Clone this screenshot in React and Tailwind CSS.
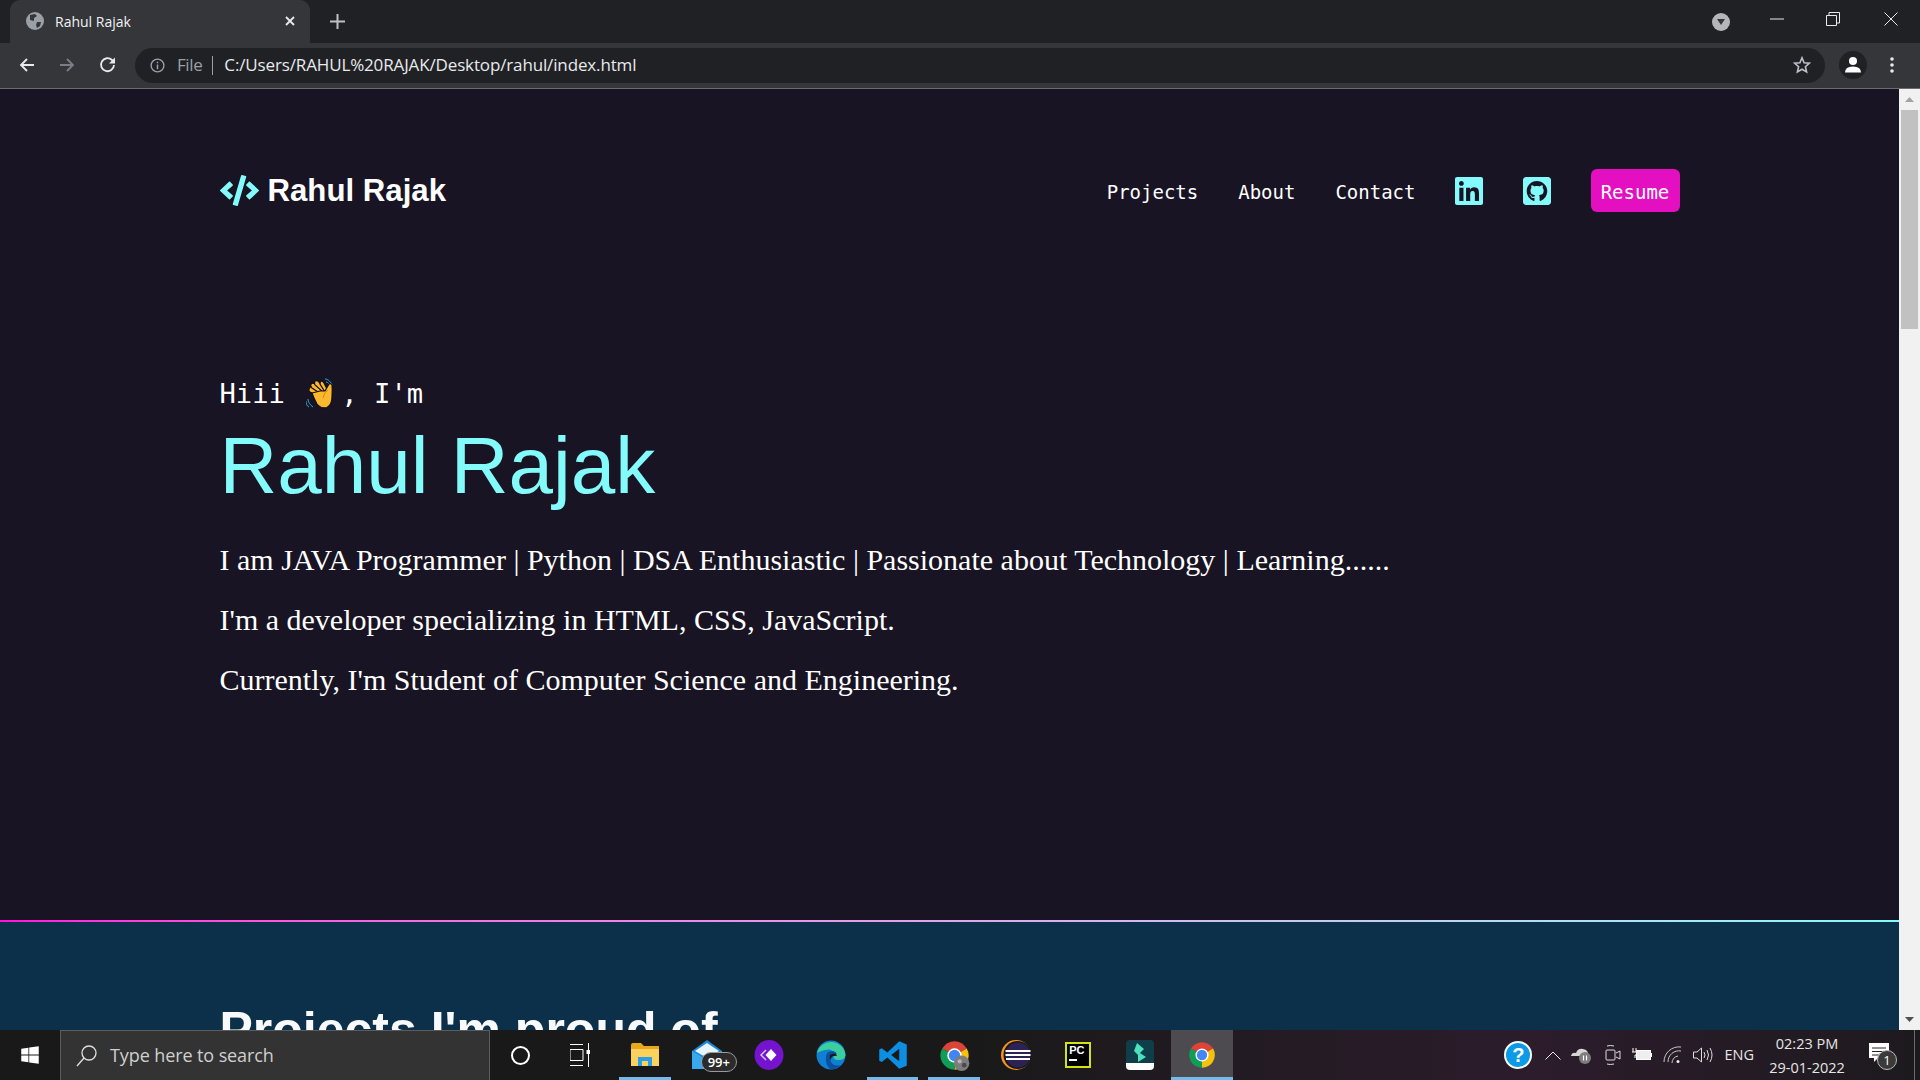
import React from "react";
import { FaCode, FaLinkedin, FaGithubSquare, FaWindows } from "react-icons/fa";

const ChromeIcon = ({ size = 28, badge = false }) => (
  <svg width={size} height={size} viewBox="0 0 24 24">
    <path d="M12 12 L2.5 6.5 A11 11 0 0 1 21.5 6.5 Z" fill="#db4437" />
    <path d="M12 12 L21.5 6.5 A11 11 0 0 1 12 23 Z" fill="#f4c20d" />
    <path d="M12 12 L12 23 A11 11 0 0 1 2.5 6.5 Z" fill="#0f9d58" />
    <circle cx="12" cy="12" r="5.6" fill="#fff" />
    <circle cx="12" cy="12" r="4.4" fill="#4285f4" />
    {badge && <circle cx="17.5" cy="18" r="6" fill="#7d7d7d" />}
    {badge && <circle cx="16" cy="16.5" r="1.6" fill="#b5b5b5" />}
    {badge && <circle cx="19.5" cy="19.5" r="1.8" fill="#4a4a4a" />}
  </svg>
);

const Hand = () => (
  <svg width="30" height="32" viewBox="0 0 30 32" className="mx-auto">
    <path d="M2 21c0 3 2 6 5 8M0 23c0 3 1 5 3 6M19 1c3 0 6 3 7 6M20 4c2 0 3 2 4 3" fill="none" stroke="#2aa9d6" strokeWidth="1" />
    <g stroke="#101010" strokeWidth="1.2" fill="#fdb92d">
      <path d="M3 11 Q4 8 7 9 L15 15 L12 18 L4 14 Q2.500 13 3 11Z" />
      <path d="M5 6 Q7 4 9 6 L18 13 L15 16 L6 10 Q4 8 5 6Z" />
      <path d="M9 3 Q11 2 13 4 L20 12 L17 14 L9 7 Q8 5 9 3Z" />
      <path d="M15 3 Q17 3 18 5 L22 13 L19 14 L14 6 Q14 4 15 3Z" />
      <path d="M6 15 L14 13 L19 13 L23 6 Q25 5 26 7 Q26.500 12 26 19 Q26 27 21 29.500 Q15 31 11 26 Q8 21 6 15Z" />
    </g>
    <path d="M22 12 Q18 14 17 20" fill="none" stroke="#d98a10" strokeWidth="1" />
  </svg>
);

const Slot = ({ active, children, selected }) => (
  <div className={`relative flex h-full w-[61.9px] items-center justify-center ${selected ? "bg-[#4e4b50]" : ""}`}>
    {children}
    {active && <div className="absolute bottom-0 left-[5px] right-[5px] h-[3px] bg-[#76b9ed]" />}
    {selected && <div className="absolute bottom-0 left-0 right-0 h-[3px] bg-[#76b9ed]" />}
  </div>
);

export default function App() {
  return (
    <div className="flex h-screen w-full flex-col overflow-hidden bg-[#181423] font-['Liberation_Sans',sans-serif]">
      {/* tab strip */}
      <div className="flex h-[43px] shrink-0 items-end bg-[#202124] pl-[10px]">
        <div className="flex h-[43px] w-[300px] items-center rounded-t-[10px] bg-[#35363a] pb-[1px] pl-[16px] pr-[14px]">
          <svg width="18" height="18" viewBox="0 0 18 18">
            <circle cx="9" cy="9" r="9" fill="#9aa0a6" />
            <path d="M4 3 L9 2 L11 4 L8 6 L8 9 L4 8 Z M11 10 L15 10 L14 14 L11 16 L10 13 Z" fill="#35363a" />
          </svg>
          <span className="ml-[11px] font-['Open_Sans',sans-serif] text-[14px] text-[#f1f3f4]">Rahul Rajak</span>
          <svg className="ml-auto" width="12" height="12" viewBox="0 0 12 12">
            <path d="M2 2 L10 10 M10 2 L2 10" stroke="#e8eaed" strokeWidth="1.800" />
          </svg>
        </div>
        <svg className="mb-[14px] ml-[20px]" width="15" height="15" viewBox="0 0 15 15">
          <path d="M7.500 0 V15 M0 7.500 H15" stroke="#bdc1c6" strokeWidth="2" />
        </svg>
        <div className="ml-auto flex h-full items-center">
          <div className="mt-[1px] flex h-[18px] w-[18px] items-center justify-center rounded-full bg-[#b4b6ba]">
            <svg width="10" height="8" viewBox="0 0 10 8"><path d="M1 1 H9 L5 7 Z" fill="#35363a" /></svg>
          </div>
          <div className="ml-[40px] flex w-[14px] justify-center pb-[6px]">
            <svg width="14" height="2" viewBox="0 0 14 2"><path d="M0 1 H14" stroke="#e8eaed" strokeWidth="1" /></svg>
          </div>
          <div className="ml-[42px] flex w-[14px] justify-center pb-[6px]">
            <svg width="14" height="14" viewBox="0 0 14 14"><path d="M.500 3.500 H10.500 V13.500 H.500 Z M3 3.500 V.500 H13.500 V11 H10.500" fill="none" stroke="#e8eaed" strokeWidth="1" /></svg>
          </div>
          <div className="ml-[44px] mr-[22px] pb-[6px]">
            <svg width="14" height="14" viewBox="0 0 14 14"><path d="M.500 .500 L13.500 13.500 M13.500 .500 L.500 13.500" stroke="#e8eaed" strokeWidth="1" /></svg>
          </div>
        </div>
      </div>
      {/* toolbar */}
      <div className="flex h-[46px] shrink-0 items-center border-b border-[#6c6c6c] bg-[#35363a] pb-[1px]">
        <svg className="ml-[19px]" width="16" height="16" viewBox="0 0 16 16"><path d="M15 8 H2 M8 2 L2 8 L8 14" fill="none" stroke="#e8eaed" strokeWidth="1.800" /></svg>
        <svg className="ml-[24px]" width="16" height="16" viewBox="0 0 16 16"><path d="M1 8 H14 M8 2 L14 8 L8 14" fill="none" stroke="#7b7e82" strokeWidth="1.800" /></svg>
        <svg className="ml-[24px]" width="18" height="18" viewBox="0 0 18 18"><path d="M15 9 A6.500 6.500 0 1 1 13 4 L15 6" fill="none" stroke="#e8eaed" strokeWidth="1.800" /><path d="M16 1.500 V7.500 H10 Z" fill="#e8eaed" /></svg>
        <div className="ml-[18px] flex h-[35px] w-[1690px] items-center rounded-full bg-[#202124] pl-[15px] pr-[14px]">
          <svg width="15" height="15" viewBox="0 0 16 16"><circle cx="8" cy="8" r="6.800" fill="none" stroke="#9aa0a6" strokeWidth="1.500" /><path d="M8 7 V12 M8 4 V5.600" stroke="#9aa0a6" strokeWidth="1.600" /></svg>
          <span className="ml-[12px] font-['Open_Sans',sans-serif] text-[17px] tracking-[-0.4px] text-[#9aa0a6]">File</span>
          <div className="ml-[10px] h-[19px] w-[1px] bg-[#9aa0a6]" />
          <span className="ml-[11px] font-['Open_Sans',sans-serif] text-[17px] tracking-[-0.14px] text-[#e8eaed]">C:/Users/RAHUL%20RAJAK/Desktop/rahul/index.html</span>
          <svg className="ml-auto" width="18" height="18" viewBox="0 0 18 18"><path d="M9 1.800 L11.100 6.700 L16.400 7.200 L12.400 10.700 L13.600 15.900 L9 13.200 L4.400 15.900 L5.600 10.700 L1.600 7.200 L6.900 6.700 Z" fill="none" stroke="#bdc1c6" strokeWidth="1.600" /></svg>
        </div>
        <div className="ml-[14px] flex h-[28px] w-[28px] items-center justify-center rounded-full bg-[#202124]">
          <svg width="18" height="18" viewBox="0 0 18 18"><circle cx="9" cy="5" r="4" fill="#fff" /><path d="M1 16.500 Q1 10.500 9 10.500 Q17 10.500 17 16.500 Z" fill="#fff" /></svg>
        </div>
        <svg className="ml-[23px]" width="4" height="16" viewBox="0 0 4 16"><circle cx="2" cy="2" r="1.800" fill="#e8eaed" /><circle cx="2" cy="8" r="1.800" fill="#e8eaed" /><circle cx="2" cy="14" r="1.800" fill="#e8eaed" /></svg>
      </div>

      {/* viewport */}
      <div className="flex min-h-0 flex-1">
        <div className="min-w-0 flex-1 overflow-hidden">
          <div className="h-[831px] bg-[#181423] pt-[80px]">
            <div className="mx-auto w-[1460px]">
              <nav className="flex h-[43px] items-center justify-between">
                <div className="flex items-center">
                  <FaCode className="text-[39px] text-[#84fbfb]" />
                  <span className="ml-[9px] pt-[2px] text-[31.2px] font-bold text-white">Rahul Rajak</span>
                </div>
                <div className="flex items-center gap-[40px] font-['DejaVu_Sans_Mono',monospace] text-[19px] text-white">
                  <span className="pt-[3px]">Projects</span>
                  <span className="pt-[3px]">About</span>
                  <span className="mr-[-1px] pt-[3px]">Contact</span>
                  <FaLinkedin className="h-[32px] w-[28px] text-[#84fbfb]" />
                  <FaGithubSquare className="h-[32px] w-[28px] text-[#84fbfb]" />
                  <span className="flex h-[43px] w-[89px] items-center justify-center rounded-[6px] bg-[#e30fc1] pt-[3px]">Resume</span>
                </div>
              </nav>
              <div className="mt-[157px] flex h-[50px] items-center font-['DejaVu_Sans_Mono',monospace] text-[27.2px] text-white">
                <span className="whitespace-pre">Hiii </span>
                <span className="w-[40px] shrink-0"><Hand /></span>
                <span className="whitespace-pre">, I'm</span>
              </div>
              <h1 className="mt-[1px] text-[80px] font-normal leading-[92px] text-[#84fbfb]">Rahul Rajak</h1>
              <div className="mt-[31px] flex flex-col gap-[26px] font-['Liberation_Serif',serif] text-[30px] leading-[34px] text-white">
                <p>I am JAVA Programmer | Python | DSA Enthusiastic | Passionate about Technology | Learning......</p>
                <p>I'm a developer specializing in HTML, CSS, JavaScript.</p>
                <p>Currently, I'm Student of Computer Science and Engineering.</p>
              </div>
            </div>
          </div>
          <div className="h-[2px] bg-gradient-to-r from-[#ff0fd8] to-[#84fbfb]" />
          <div className="h-[300px] bg-[#0d304a] pt-[78px]">
            <h2 className="mx-auto w-[1460px] text-[50px] font-bold leading-[60px] text-[#f8f9fb]">Projects I'm proud of</h2>
          </div>
        </div>
        <div className="flex w-[21px] shrink-0 flex-col items-center bg-[#f1f1f1]">
          <svg className="mt-[8px]" width="9" height="5" viewBox="0 0 9 5"><path d="M0 5 L4.500 0 L9 5 Z" fill="#a3a3a3" /></svg>
          <div className="mt-[8px] h-[219px] w-[17px] bg-[#c1c1c1]" />
          <svg className="mb-[8px] mt-auto" width="9" height="5" viewBox="0 0 9 5"><path d="M0 0 L9 0 L4.500 5 Z" fill="#505050" /></svg>
        </div>
      </div>

      {/* taskbar */}
      <div className="flex h-[50px] shrink-0 items-center bg-gradient-to-r from-[#191919] from-50% via-[#2c1c2c] via-80% to-[#1d1a1e] font-['Open_Sans',sans-serif] text-white">
        <div className="flex w-[60px] justify-center"><FaWindows className="text-[20px] text-white" /></div>
        <div className="flex h-full w-[430px] items-center border border-b-0 border-[#5c5c5c] bg-[#333333] pl-[14px]">
          <svg width="24" height="24" viewBox="0 0 24 24"><circle cx="14" cy="9" r="7" fill="none" stroke="#e0e0e0" strokeWidth="1.300" /><path d="M9 14 L2 22" stroke="#e0e0e0" strokeWidth="1.300" /></svg>
          <span className="ml-[11px] text-[18px] tracking-[-0.1px] text-[#cfcfcf]">Type here to search</span>
        </div>
        <div className="flex w-[60px] justify-center">
          <div className="h-[19px] w-[19px] rounded-full border-[2.5px] border-white" />
        </div>
        <div className="flex w-[60px] justify-center">
          <svg width="20" height="24" viewBox="0 0 20 24"><path d="M0 1.500 H13 M0 6.500 H13 V17.500 H0 Z M0 22.500 H13 M18.500 0 V24" fill="none" stroke="#fff" strokeWidth="1" /><rect x="16.500" y="7" width="4" height="4" fill="#fff" /></svg>
        </div>
        <div className="ml-[4px] flex h-full">
          <Slot active>
            <svg width="28" height="24" viewBox="0 0 28 24"><path d="M0 2 Q0 0 2 0 H10 L13 3 H28 V22 H0 Z" fill="#e9a81c" /><path d="M0 6 H28 V23 H0 Z" fill="#fbd25c" /><path d="M7 14 H21 V23 H17 V18 H11 V23 H7 Z" fill="#2b9fe8" /></svg>
          </Slot>
          <Slot>
            <div className="relative h-[30px] w-[30px]">
              <svg width="30" height="30" viewBox="0 0 30 30"><path d="M0 11 L15 0 L30 11 V29 H0 Z" fill="#1e88d6" /><path d="M3 11 L15 3 L27 11 L15 18 Z" fill="#e8f5fd" /><path d="M0 11 L15 20 L30 11 V29 H0 Z" fill="#38a8ef" /></svg>
              <span className="absolute left-[9px] top-[12px] flex h-[20px] w-[36px] items-center justify-center rounded-full border border-[#9a9a9a] bg-[#2b2b2b] text-[13px] font-semibold leading-none text-white">99+</span>
            </div>
          </Slot>
          <Slot>
            <svg width="30" height="30" viewBox="0 0 30 30"><ellipse cx="15" cy="15" rx="14.500" ry="15" fill="#7414cf" /><path d="M17 9 L22.500 15 L17 21 L11.500 15 Z" fill="#fff" /><path d="M12 10 L7 15 L12 20" fill="none" stroke="#d9bff5" strokeWidth="1.500" /></svg>
          </Slot>
          <Slot>
            <svg width="30" height="30" viewBox="0 0 30 30"><circle cx="15" cy="15" r="14.500" fill="#0f7fd4" /><path d="M1 13 A14.500 14.500 0 0 1 29.500 15 Q29 20 23 20 Q15 20 19 14 Q16 8 9 10 Q4 11 1 13Z" fill="#3ccf9e" /><path d="M10 17 Q10 11 17 11 Q23 13 19 16 Q12 15 15 22 Q18 27 25 25 Q20 30 14 29 Q9 24 10 17Z" fill="#0b4f9e" /><path d="M14 15 Q20 12 21 16 Q15 15 15 20 Q13 18 14 15Z" fill="#191919" /></svg>
          </Slot>
          <Slot active>
            <svg width="30" height="30" viewBox="0 0 24 24"><path fillRule="evenodd" d="M17 1 L7.500 10 L3 6.500 L1 7.500 V16.500 L3 17.500 L7.500 14 L17 23 L23 20.500 V3.500 Z M17 7 V17 L10.500 12 Z" fill="#0c8ee3" /></svg>
          </Slot>
          <Slot active><ChromeIcon size={31} badge /></Slot>
          <Slot>
            <svg width="30" height="30" viewBox="0 0 30 30"><circle cx="15" cy="15" r="15" fill="#f7941e" /><circle cx="16.500" cy="15" r="14" fill="#191919" /><circle cx="17" cy="15" r="12.500" fill="#2c2255" /><path d="M4.500 11 H29.500 M4.500 15 H29.500 M5 19 H29" stroke="#fff" strokeWidth="2" /></svg>
          </Slot>
          <Slot>
            <div className="flex h-[26px] w-[26px] flex-col border-2 border-[#d3e312] bg-black pl-[2px] pt-[1px]">
              <span className="font-['Liberation_Sans',sans-serif] text-[11px] font-bold leading-[11px] text-white">PC</span>
              <div className="mt-[3px] h-[2px] w-[8px] bg-white" />
            </div>
          </Slot>
          <Slot>
            <svg width="28" height="30" viewBox="0 0 28 30"><rect width="28" height="30" rx="4" fill="#0f3d4a" /><path d="M11 3 L18 9 L14 13 L20 17 L12 22 L12 15 L8 11 Z" fill="#4de0bd" /><path d="M0 23 H28 V26 Q28 30 24 30 H4 Q0 30 0 26 Z" fill="#fff" /></svg>
          </Slot>
          <Slot selected><ChromeIcon size={28} /></Slot>
        </div>
        <div className="ml-auto flex h-full items-center pr-[5px]">
          <div className="flex h-[28px] w-[28px] items-center justify-center rounded-full border-2 border-white bg-[#0a9ae6] font-['Liberation_Sans',sans-serif] text-[20px] font-bold leading-none text-white">?</div>
          <svg className="ml-[13px]" width="16" height="9" viewBox="0 0 16 9"><path d="M0.500 8.500 L8 1 L15.500 8.500" fill="none" stroke="#e6e6e6" strokeWidth="1" /></svg>
          <svg className="ml-[10px]" width="20" height="18" viewBox="0 0 20 18"><path d="M0 10 Q1 6 5 7 Q7 2 12 3 Q18 4 17 10 H0Z" fill="#d5d5d5" /><circle cx="14" cy="12" r="6" fill="#7d7d7d" /><path d="M12.500 9.500 V14.500 M15.500 9.500 V14.500" stroke="#fff" strokeWidth="1.200" /></svg>
          <svg className="ml-[14px]" width="16" height="20" viewBox="0 0 16 20"><path d="M2 1 Q5 0 9 1 M2 19 Q5 20 9 19" fill="none" stroke="#ddd" /><rect x="1" y="5" width="9" height="10" rx="1" fill="none" stroke="#ddd" /><path d="M11 8 L15 6 V14 L11 12" fill="none" stroke="#ddd" /></svg>
          <svg className="ml-[11px]" width="20" height="14" viewBox="0 0 20 14"><path d="M1 0 V4 M4 0 V4 M0 4 H5 V7 H3 V10" fill="none" stroke="#fff" /><rect x="4.500" y="2.500" width="14" height="9" fill="#eee" stroke="#fff" /><rect x="19" y="5" width="1" height="4" fill="#fff" /></svg>
          <svg className="ml-[11px]" width="19" height="18" viewBox="0 0 19 18"><path d="M1 16 A15 15 0 0 1 18 1 M5 16 A11 11 0 0 1 18 5 M9 17 A7 7 0 0 1 15 10" fill="none" stroke="#c8c8c8" /><circle cx="15" cy="15.500" r="1.500" fill="#eee" /></svg>
          <svg className="ml-[11px]" width="20" height="16" viewBox="0 0 20 16"><path d="M0.500 5 H4 L8.500 1 V15 L4 11 H0.500 Z M11 5 Q13 8 11 11 M14 3 Q17 8 14 13 M17 1 Q21 8 17 15" fill="none" stroke="#ddd" /></svg>
          <span className="ml-[11px] text-[14.500px] text-[#e6e6e6]">ENG</span>
          <div className="ml-[12px] flex w-[82px] flex-col items-center pt-[1px] text-[14.500px] leading-[24px] text-[#e6e6e6]">
            <span className="whitespace-nowrap">02:23 PM</span>
            <span className="whitespace-nowrap">29-01-2022</span>
          </div>
          <div className="relative ml-[20px] h-[30px] w-[30px]">
            <svg width="22" height="22" viewBox="0 0 22 22" className="mt-[2px]"><path d="M1 1 H21 V16 H10 L6 20 V16 H1 Z" fill="#fff" /><path d="M4 6 H18 M4 9.500 H18 M4 13 H14" stroke="#222" /></svg>
            <span className="absolute left-[9px] top-[10px] flex h-[20px] w-[20px] items-center justify-center rounded-full border border-[#bbb] bg-[#3a3a3a] text-[13px] leading-none text-white">1</span>
          </div>
          <div className="ml-[16px] h-full w-[1px] bg-[#6a6a6a]" />
        </div>
      </div>
    </div>
  );
}
